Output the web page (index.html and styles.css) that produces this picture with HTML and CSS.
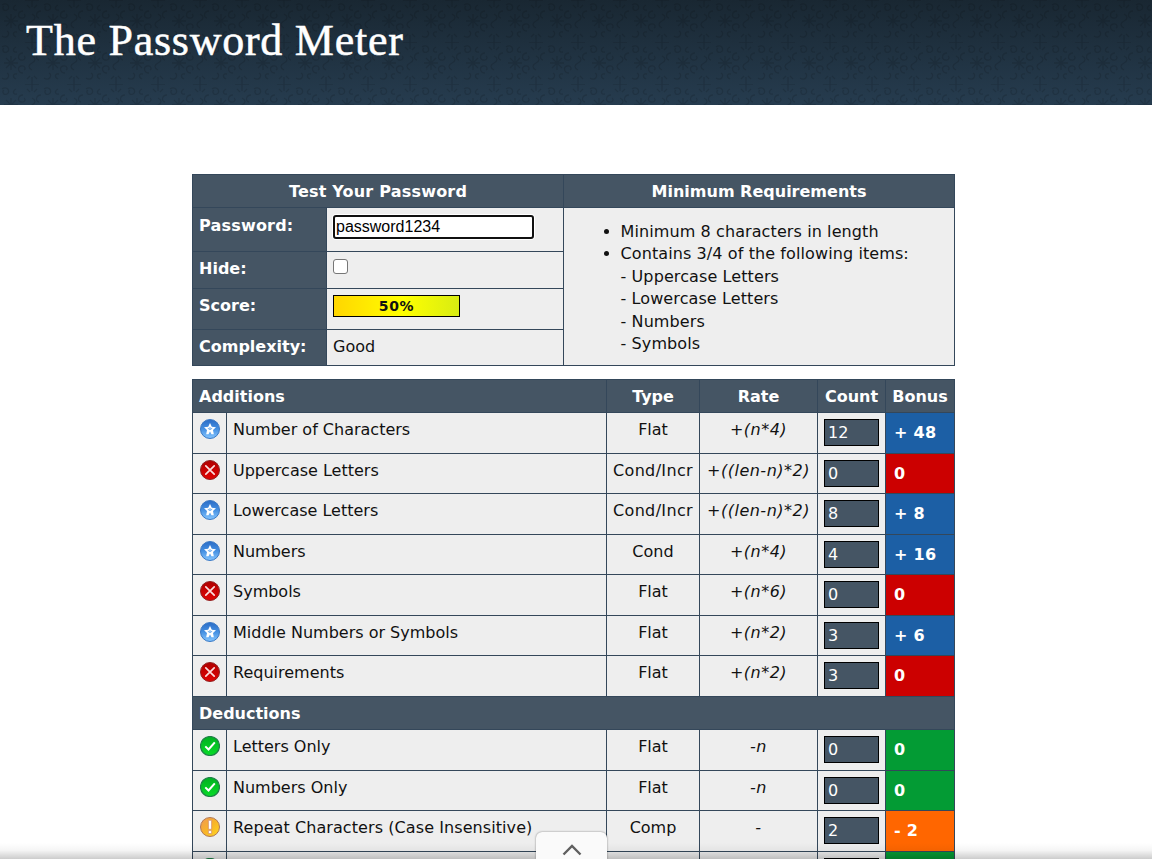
FILE: index.html
```html
<!DOCTYPE html>
<html lang="en">
<head>
<meta charset="utf-8">
<title>The Password Meter</title>
<link rel="stylesheet" href="styles.css">
</head>
<body>
<svg width="0" height="0" class="defs">
  <defs>
    <linearGradient id="gb" x2="0" y2="1"><stop stop-color="#2a6cc6"/><stop offset=".5" stop-color="#4590e2"/><stop offset="1" stop-color="#86c6ff"/></linearGradient>
    <linearGradient id="gr" x2="0" y2="1"><stop stop-color="#b00000"/><stop offset="1" stop-color="#e00404"/></linearGradient>
    <linearGradient id="gg" x2="0" y2="1"><stop stop-color="#00b020"/><stop offset="1" stop-color="#08dc28"/></linearGradient>
    <linearGradient id="go" x2="1" y2="1"><stop stop-color="#f09858"/><stop offset=".5" stop-color="#f8b428"/><stop offset="1" stop-color="#ffd820"/></linearGradient>
    <symbol id="star" viewBox="0 0 20 20"><circle cx="10" cy="10" r="9.5" fill="url(#gb)" stroke="#3a78c4"/><path d="M10 4l1.800 3.700 4.200.5-3 2.800.8 4.300H11.500L10 12.500 8.500 15.300H6.200L7 11 4 8.200l4.200-.5z" fill="#fff"/><path d="M10 8v2.500M7.800 9.300l2.200 1.200 2.200-1.200" stroke="#5a9ee8" stroke-width=".9" fill="none"/></symbol>
    <symbol id="bad" viewBox="0 0 20 20"><circle cx="10" cy="10" r="9.500" fill="url(#gr)" stroke="#902020"/><path d="M5.800 5.800l8.400 8.400M14.200 5.800l-8.400 8.400" stroke="#fbdede" stroke-width="1.700" stroke-linecap="round"/></symbol>
    <symbol id="ok" viewBox="0 0 20 20"><circle cx="10" cy="10" r="9.500" fill="url(#gg)" stroke="#208048" stroke-width="1.200"/><path d="M5.300 10.400l3.200 3.100L14.800 6.300" stroke="#fff" stroke-width="2" fill="none"/></symbol>
    <symbol id="warn" viewBox="0 0 20 20"><circle cx="10" cy="10" r="9.500" fill="url(#go)" stroke="#b07858"/><path d="M8.400 3.300h3.200v9H8.400zM8.400 13.600h3.200v3H8.400z" fill="#fff" stroke="#d08868" stroke-width=".7"/></symbol>
    <pattern id="lace" width="42" height="42" patternUnits="userSpaceOnUse">
      <g fill="none" stroke="#000" stroke-opacity=".13" stroke-width="1.300">
        <path d="M11 14v7M11 28v-7M4 21h14M6 16l10 10M16 16L6 26M32 0v7M32 35v7M25 0h14M27 37l3-3M37 37l-3-3M27 5l3 3M37 5l-3 3"/>
        <path d="M23 11c-5 0-6 6-2 7s5-3 3-4M41 11c-5 0-6 6-2 7M23 31c-5 0-6-6-2-7s5 3 3 4M32 14c4 2 4 5 0 7s-4 5 0 7M2 5c5-4 9 3 5 5s-5-3-3-4M16 5c-4 2-3 6 1 5M2 36c5 4 9-3 5-5M16 37c-4-2-3-6 1-5"/>
      </g>
    </pattern>
  </defs>
</svg>
<header class="banner"><svg class="texture"><rect width="100%" height="100%" fill="url(#lace)"/></svg><h1>The Password Meter</h1></header>
<main class="content">
  <section class="test">
    <div class="head">Test Your Password</div>
    <div class="head">Minimum Requirements</div>
    <div class="fields">
      <div class="label first">Password:</div><div class="value"><input class="pwd" type="text" value="password1234"></div>
      <div class="label">Hide:</div><div class="value"><span class="check"></span></div>
      <div class="label">Score:</div><div class="value"><div class="score">50%</div></div>
      <div class="label">Complexity:</div><div class="value">Good</div>
    </div>
    <div class="reqs">
      <ul>
        <li>Minimum 8 characters in length</li>
        <li>Contains 3/4 of the following items:<br>- Uppercase Letters<br>- Lowercase Letters<br>- Numbers<br>- Symbols</li>
      </ul>
    </div>
  </section>
  <section class="scores">
    <div class="row title"><div class="wide">Additions</div><div class="mid">Type</div><div class="mid">Rate</div><div class="mid">Count</div><div class="mid">Bonus</div></div>
    <div class="row"><div><svg class="ico"><use href="#star"/></svg></div><div>Number of Characters</div><div class="mid">Flat</div><div class="mid it">+(n*4)</div><div><span class="count">12</span></div><div class="bonus blue">+ 48</div></div>
    <div class="row"><div><svg class="ico"><use href="#bad"/></svg></div><div>Uppercase Letters</div><div class="mid ls">Cond/Incr</div><div class="mid it">+((len-n)*2)</div><div><span class="count">0</span></div><div class="bonus red">0</div></div>
    <div class="row"><div><svg class="ico"><use href="#star"/></svg></div><div>Lowercase Letters</div><div class="mid ls">Cond/Incr</div><div class="mid it">+((len-n)*2)</div><div><span class="count">8</span></div><div class="bonus blue">+ 8</div></div>
    <div class="row"><div><svg class="ico"><use href="#star"/></svg></div><div>Numbers</div><div class="mid">Cond</div><div class="mid it">+(n*4)</div><div><span class="count">4</span></div><div class="bonus blue">+ 16</div></div>
    <div class="row"><div><svg class="ico"><use href="#bad"/></svg></div><div>Symbols</div><div class="mid">Flat</div><div class="mid it">+(n*6)</div><div><span class="count">0</span></div><div class="bonus red">0</div></div>
    <div class="row"><div><svg class="ico"><use href="#star"/></svg></div><div>Middle Numbers or Symbols</div><div class="mid">Flat</div><div class="mid it">+(n*2)</div><div><span class="count">3</span></div><div class="bonus blue">+ 6</div></div>
    <div class="row"><div><svg class="ico"><use href="#bad"/></svg></div><div>Requirements</div><div class="mid">Flat</div><div class="mid it">+(n*2)</div><div><span class="count">3</span></div><div class="bonus red">0</div></div>
    <div class="row title second"><div class="full">Deductions</div></div>
    <div class="row"><div><svg class="ico"><use href="#ok"/></svg></div><div>Letters Only</div><div class="mid">Flat</div><div class="mid it">-n</div><div><span class="count">0</span></div><div class="bonus green">0</div></div>
    <div class="row"><div><svg class="ico"><use href="#ok"/></svg></div><div>Numbers Only</div><div class="mid">Flat</div><div class="mid it">-n</div><div><span class="count">0</span></div><div class="bonus green">0</div></div>
    <div class="row"><div><svg class="ico"><use href="#warn"/></svg></div><div class="long">Repeat Characters (Case Insensitive)</div><div class="mid">Comp</div><div class="mid it">-</div><div><span class="count">2</span></div><div class="bonus orange">- 2</div></div>
    <div class="row"><div><svg class="ico"><use href="#ok"/></svg></div><div></div><div></div><div></div><div><span class="count"></span></div><div class="bonus green"></div></div>
  </section>
</main>
<div class="shade"></div>
<div class="tab"><svg width="20" height="12" viewBox="0 0 20 12"><path d="M1.500 10.500L10 2l8.500 8.500" fill="none" stroke="#606060" stroke-width="2.400"/></svg></div>
</body>
</html>
```
FILE: styles.css
```css
* { box-sizing: border-box; }
body { margin: 0; height: 859px; overflow: hidden; position: relative; background: #fff; color: #111; font: 16px/22.4px Verdana, "DejaVu Sans", sans-serif; }
.defs { position: absolute; }
.banner { position: relative; height: 105px; padding: 16px 0 0 26px; background: linear-gradient(#192732, #263c4f); }
.texture { position: absolute; inset: 0; width: 100%; height: 100%; }
h1 { position: relative; margin: 0; color: #fff; font: 400 44px/50px Georgia, "Liberation Serif", serif; letter-spacing: .75px; -webkit-text-stroke: .5px #fff; white-space: nowrap; }
.content { width: 763px; margin: 69px 0 0 192px; }
.test { display: grid; grid-template-columns: 371px 392px; grid-template-rows: 33px 159px; height: 192px; }
.head { background: #455564; color: #fff; font-weight: 700; text-align: center; border: 1px solid #34475a; border-width: 1px 0 0 1px; padding-top: 6px; }
.head:first-child { letter-spacing: .2px; }
.head:nth-child(2) { border-right-width: 1px; }
.fields { display: grid; grid-template-columns: 134px 237px; grid-template-rows: 44px 37px 41px 37px; background: #eee; }
.label { background: #455564; color: #fff; font-weight: 700; padding: 6px; }
.label.first { padding-top: 7px; letter-spacing: .2px; }
.label, .value { border: 1px solid #34475a; border-width: 1px 0 0 1px; }
.value { padding: 6px; }
.label:nth-last-child(2), .value:last-child { border-bottom-width: 1px; }
.pwd { display: block; margin-top: 1px; width: 201px; height: 24px; padding: 0 1px; border: 2px solid #101010; border-radius: 3px; box-shadow: 0 0 0 1px #fff; outline: 0; background: #fff; color: #000; font: 16px "Liberation Sans", sans-serif; }
.check { display: block; width: 15px; height: 15px; margin-top: 1px; border: 1px solid #767676; border-radius: 3px; background: #fff; }
.score { width: 127px; height: 22px; border: 1px solid #000; background: linear-gradient(90deg, #ffd600, #ff0 55%, #d8ec12); text-align: center; font-size: 14px; line-height: 20px; letter-spacing: .6px; font-weight: 700; }
.reqs { border: 1px solid #34475a; background: #eee; padding-top: 13px; letter-spacing: .1px; }
.reqs ul { margin: 0; padding-left: 56.5px; }
.scores { margin-top: 13px; border-right: 1px solid #34475a; }
.row { display: grid; grid-template-columns: 34px 380px 93px 118px 68px 69px; height: 40.5px; background: #eee; white-space: nowrap; }
.row > div { border: 1px solid #34475a; border-width: 1px 0 0 1px; padding: 6px 0 0 6px; }
.row > .mid { padding-left: 0; text-align: center; }
.row.title { height: 33px; background: #455564; color: #fff; font-weight: 700; }
.row.second { height: 33.5px; }
.wide { grid-column: span 2; }
.full { grid-column: span 6; }
.it { font-style: italic; letter-spacing: .5px; }
.ls { letter-spacing: .35px; }
.long { letter-spacing: .08px; }
.ico { display: block; width: 20px; height: 20px; margin: 0 0 0 1px; }
.count { display: block; width: 55px; height: 27px; border: 1px solid #000; background: #455564; color: #fff; padding: 2px 0 0 3px; }
.row > .bonus { color: #fff; font-weight: 700; letter-spacing: .3px; padding: 9px 0 0 8px; }
.row > .blue { background: #1c5fa5; }
.row > .red { background: #c00; }
.row > .green { background: #039b34; }
.row > .orange { background: #f60; }
.shade { position: absolute; left: 0; right: 0; bottom: 0; height: 16px; background: linear-gradient(transparent, rgba(0,0,0,.04) 45%, rgba(0,0,0,.2)); }
.tab { position: absolute; left: 536px; top: 832px; width: 71px; height: 27px; padding-top: 12px; border-radius: 6px 6px 0 0; background: #fafafa; box-shadow: 0 0 2px rgba(0,0,0,.5); display: flex; justify-content: center; }
```
